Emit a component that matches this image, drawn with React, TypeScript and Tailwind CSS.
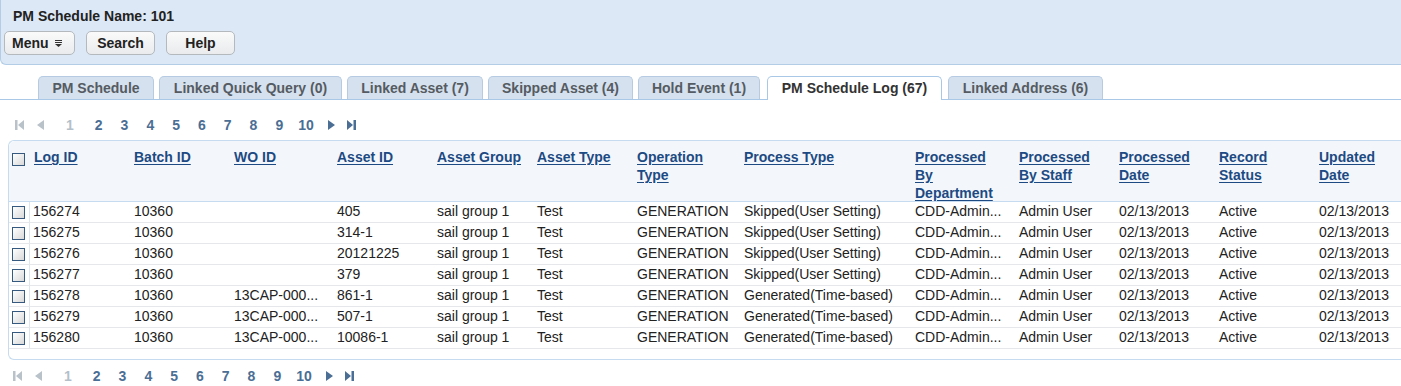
import React from "react";

const FONT = "font-['Liberation_Sans',Arial,Helvetica,sans-serif]";

function FirstIcon({ c }: { c: string }) {
  return (
    <svg width="9" height="10" viewBox="0 0 9 10" className="shrink-0">
      <rect x="0" y="0" width="2.5" height="10" fill={c} />
      <polygon points="9,0 9,10 3,5" fill={c} />
    </svg>
  );
}
function PrevIcon({ c }: { c: string }) {
  return (
    <svg width="7" height="10" viewBox="0 0 7 10" className="shrink-0">
      <polygon points="7,0 7,10 0,5" fill={c} />
    </svg>
  );
}
function NextIcon({ c }: { c: string }) {
  return (
    <svg width="7" height="10" viewBox="0 0 7 10" className="shrink-0">
      <polygon points="0,0 0,10 7,5" fill={c} />
    </svg>
  );
}
function LastIcon({ c }: { c: string }) {
  return (
    <svg width="9" height="10" viewBox="0 0 9 10" className="shrink-0">
      <polygon points="0,0 0,10 6,5" fill={c} />
      <rect x="6.5" y="0" width="2.5" height="10" fill={c} />
    </svg>
  );
}

function Pager({ bottom }: { bottom?: boolean }) {
  const dis = "#b9c1c9";
  const act = "#4b6e94";
  return (
    <div
      className={
        "flex items-center h-4 leading-4 text-[14px] font-bold text-[#4b6e94] " +
        (bottom ? "pl-[13px]" : "pl-[15px]")
      }
    >
      <FirstIcon c={dis} />
      <span className="ml-[13px] flex">
        <PrevIcon c={dis} />
      </span>
      <span className="ml-[22px] text-[#b5bfca]">1</span>
      <span className="ml-[21px]">2</span>
      <span className="ml-[18px]">3</span>
      <span className="ml-[18px]">4</span>
      <span className="ml-[18px]">5</span>
      <span className="ml-[18px]">6</span>
      <span className="ml-[18px]">7</span>
      <span className="ml-[18px]">8</span>
      <span className="ml-[18px]">9</span>
      <span className="ml-[15px]">10</span>
      <span className="ml-[14px] flex">
        <NextIcon c={act} />
      </span>
      <span className="ml-[12px] flex">
        <LastIcon c={act} />
      </span>
    </div>
  );
}

function Checkbox() {
  return (
    <div className="w-[13px] h-[13px] border border-[#36597f] bg-gradient-to-br from-white to-[#d9d9d9]" />
  );
}

const tabs: { label: string; cls: string; active?: boolean }[] = [
  { label: "PM Schedule", cls: "w-[116px]" },
  { label: "Linked Quick Query (0)", cls: "w-[183px] ml-[5px]" },
  { label: "Linked Asset (7)", cls: "w-[136px] ml-[5px]" },
  { label: "Skipped Asset (4)", cls: "w-[145px] ml-[5px]" },
  { label: "Hold Event (1)", cls: "w-[122px] ml-[5px]" },
  { label: "PM Schedule Log (67)", cls: "w-[175px] ml-[7px]", active: true },
  { label: "Linked Address (6)", cls: "w-[155px] ml-[6px]" },
];

const cols: { label: string[]; w: string }[] = [
  { label: ["Log ID"], w: "w-[100px]" },
  { label: ["Batch ID"], w: "w-[100px]" },
  { label: ["WO ID"], w: "w-[103px]" },
  { label: ["Asset ID"], w: "w-[100px]" },
  { label: ["Asset Group"], w: "w-[100px]" },
  { label: ["Asset Type"], w: "w-[100px]" },
  { label: ["Operation", "Type"], w: "w-[107px]" },
  { label: ["Process Type"], w: "w-[171px]" },
  { label: ["Processed", "By", "Department"], w: "w-[104px]" },
  { label: ["Processed", "By Staff"], w: "w-[100px]" },
  { label: ["Processed", "Date"], w: "w-[100px]" },
  { label: ["Record", "Status"], w: "w-[100px]" },
  { label: ["Updated", "Date"], w: "w-[100px]" },
];

const rows: string[][] = [
  ["156274", "10360", "", "405", "sail group 1", "Test", "GENERATION", "Skipped(User Setting)", "CDD-Admin...", "Admin User", "02/13/2013", "Active", "02/13/2013"],
  ["156275", "10360", "", "314-1", "sail group 1", "Test", "GENERATION", "Skipped(User Setting)", "CDD-Admin...", "Admin User", "02/13/2013", "Active", "02/13/2013"],
  ["156276", "10360", "", "20121225", "sail group 1", "Test", "GENERATION", "Skipped(User Setting)", "CDD-Admin...", "Admin User", "02/13/2013", "Active", "02/13/2013"],
  ["156277", "10360", "", "379", "sail group 1", "Test", "GENERATION", "Skipped(User Setting)", "CDD-Admin...", "Admin User", "02/13/2013", "Active", "02/13/2013"],
  ["156278", "10360", "13CAP-000...", "861-1", "sail group 1", "Test", "GENERATION", "Generated(Time-based)", "CDD-Admin...", "Admin User", "02/13/2013", "Active", "02/13/2013"],
  ["156279", "10360", "13CAP-000...", "507-1", "sail group 1", "Test", "GENERATION", "Generated(Time-based)", "CDD-Admin...", "Admin User", "02/13/2013", "Active", "02/13/2013"],
  ["156280", "10360", "13CAP-000...", "10086-1", "sail group 1", "Test", "GENERATION", "Generated(Time-based)", "CDD-Admin...", "Admin User", "02/13/2013", "Active", "02/13/2013"],
];

function Button({ children, cls }: { children: React.ReactNode; cls: string }) {
  return (
    <div
      className={
        "h-[24px] rounded-[5px] border border-[#b4b9be] bg-gradient-to-b from-[#fafafa] to-[#e9ebed] flex items-center text-[14px] font-bold text-[#222] " +
        cls
      }
    >
      {children}
    </div>
  );
}

export default function App() {
  return (
    <div className={"w-[1401px] h-[386px] overflow-hidden bg-white " + FONT}>
      {/* Header */}
      <div className="h-[65px] bg-[#dce8f5] border-b border-l border-[#b3cde7] rounded-bl-[6px] pt-[8px]">
        <div className="pl-[12px] h-4 leading-4 text-[14px] font-bold text-[#222]">
          PM Schedule Name: 101
        </div>
        <div className="flex mt-[7px] ml-[3px] gap-[11px]">
          <Button cls="w-[71px] pl-[7px]">
            <span>Menu</span>
            <svg width="7" height="7" viewBox="0 0 7 7" className="ml-[6px]">
              <rect x="0" y="0" width="7" height="1" fill="#333" />
              <rect x="0" y="2" width="7" height="1" fill="#333" />
              <polygon points="0,4 7,4 3.5,7" fill="#333" />
            </svg>
          </Button>
          <Button cls="w-[69px] justify-center">Search</Button>
          <Button cls="w-[69px] justify-center">Help</Button>
        </div>
      </div>

      {/* Tabs */}
      <div className="mt-[11px] h-[24px] flex items-end pl-[38px] border-b border-[#a9c7e6]">
        {tabs.map((t) => (
          <div
            key={t.label}
            className={
              "rounded-t-[5px] border border-b-0 flex items-center justify-center text-[14px] font-bold whitespace-nowrap " +
              t.cls +
              (t.active
                ? " h-[24px] -mb-px bg-white border-[#a9c7e6] text-[#333]"
                : " h-[23px] bg-[#d5e1ee] border-[#b6cbe2] text-[#555b62]")
            }
          >
            {t.label}
          </div>
        ))}
      </div>

      {/* Top pager */}
      <div className="mt-[17px]">
        <Pager />
      </div>

      {/* Table */}
      <div className="mt-[7px] ml-[8px] w-[1420px] border border-r-0 border-[#c6dbef] rounded-l-[6px] pb-[10px] text-[14px]">
        <div className="flex h-[61px] bg-[#f3f7fc] rounded-tl-[6px] border-b border-[#c6dbef]">
          <div className="w-[21px] shrink-0 pl-[3px] pt-[12px]">
            <Checkbox />
          </div>
          {cols.map((c) => (
            <div key={c.label.join(" ")} className={"shrink-0 pl-[4px] pt-[7px] " + c.w}>
              {c.label.map((l, i) => (
                <div
                  key={i}
                  className="leading-[18px] font-bold text-[#1d4a82] underline underline-offset-[2px] whitespace-nowrap"
                >
                  {l}
                </div>
              ))}
            </div>
          ))}
        </div>
        {rows.map((r) => (
          <div key={r[0]} className="flex h-[21px] border-b border-[#e5e7ea] text-[#222]">
            <div className="w-[21px] shrink-0 pl-[3px] flex items-center border-r border-[#dde5ee]">
              <Checkbox />
            </div>
            {r.map((v, i) => (
              <div
                key={i}
                className={
                  "shrink-0 flex items-center pb-[2px] whitespace-nowrap overflow-hidden " +
                  (i === 0 ? "pl-[3px] " : "pl-[4px] ") +
                  cols[i].w
                }
              >
                {v}
              </div>
            ))}
          </div>
        ))}
      </div>

      {/* Bottom pager */}
      <div className="mt-[8px]">
        <Pager bottom />
      </div>
    </div>
  );
}
